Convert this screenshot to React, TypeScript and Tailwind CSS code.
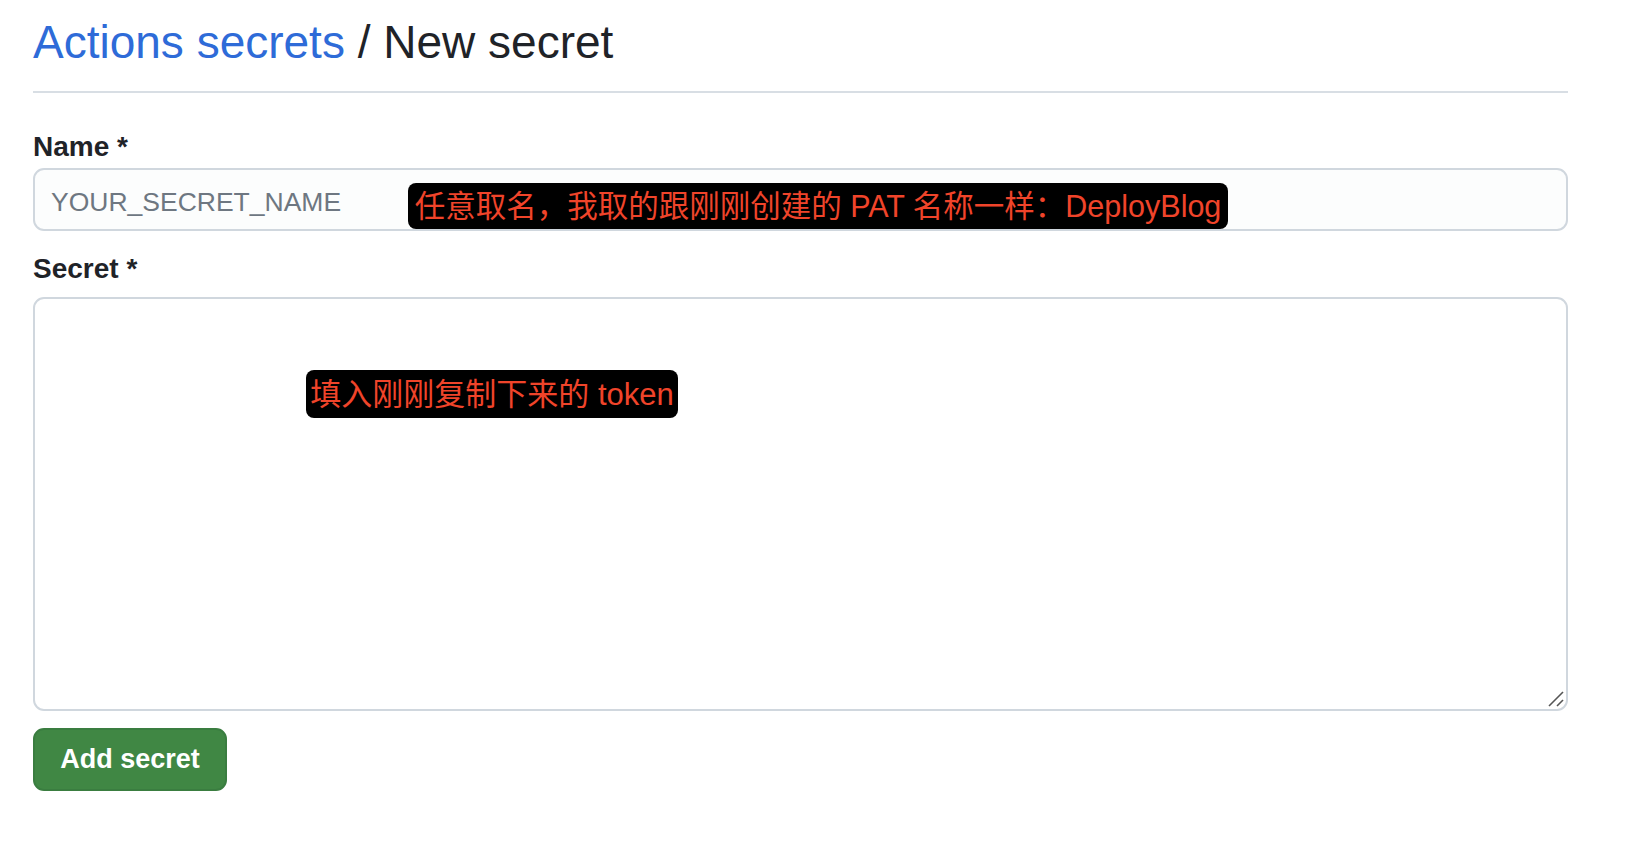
import React from "react";

const sans = "font-['Liberation_Sans','Noto_Sans_CJK_SC',sans-serif]";

export default function App() {
  return (
    <div className={`relative min-h-[854px] w-[1640px] bg-white ${sans}`}>
      <div className="pl-[33px] pr-[72px] pt-[14px]">
        <h1 className="text-[46px] leading-[56px] font-normal text-[#1f2328]">
          <a className="text-[#2e6bd8]">Actions secrets</a> / New secret
        </h1>
        <div className="mt-[21px] h-[2px] bg-[#d8dee4]" />

        <div className="mt-[38px]">
          <label className="block text-[28px] leading-[32px] font-bold text-[#1f2328]">Name *</label>
          <input
            className="mt-[5px] block h-[63px] w-full rounded-[11px] border-2 border-[#d0d7de] bg-[#fcfdfd] px-[16px] pt-[5px] text-[26.5px] text-[#1f2328] outline-none placeholder:text-[#6e7781]"
            placeholder="YOUR_SECRET_NAME"
          />
        </div>

        <div className="mt-[22px]">
          <label className="block text-[28px] leading-[32px] font-bold text-[#1f2328]">Secret *</label>
          <div className="relative mt-[12px]">
            <textarea className="block h-[414px] w-full resize-none rounded-[11px] border-2 border-[#d0d7de] bg-white px-[16px] py-[10px] text-[27px] outline-none" />
            <svg
              className="pointer-events-none absolute bottom-[4px] right-[4px]"
              width="16"
              height="16"
              viewBox="0 0 16 16"
            >
              <line x1="1" y1="15" x2="15" y2="1" stroke="#555" strokeWidth="1.6" />
              <line x1="9" y1="15" x2="15" y2="9" stroke="#555" strokeWidth="1.6" />
            </svg>
          </div>
        </div>

        <button className="mt-[17px] flex h-[63px] w-[194px] items-center justify-center rounded-[11px] border-2 border-[#3a7d40] bg-[#408744] text-[27px] font-bold text-white">
          Add secret
        </button>
      </div>

      <div className="absolute left-[408px] top-[183px] flex h-[46px] w-[820px] items-center justify-center rounded-[8px] bg-black text-[30.5px] leading-none text-[#f0442a]">
        任意取名，我取的跟刚刚创建的 PAT 名称一样：DeployBlog
      </div>
      <div className="absolute left-[306px] top-[370px] flex h-[48px] w-[372px] items-center justify-center rounded-[8px] bg-black text-[31px] leading-none text-[#f0442a]">
        填入刚刚复制下来的 token
      </div>
    </div>
  );
}
